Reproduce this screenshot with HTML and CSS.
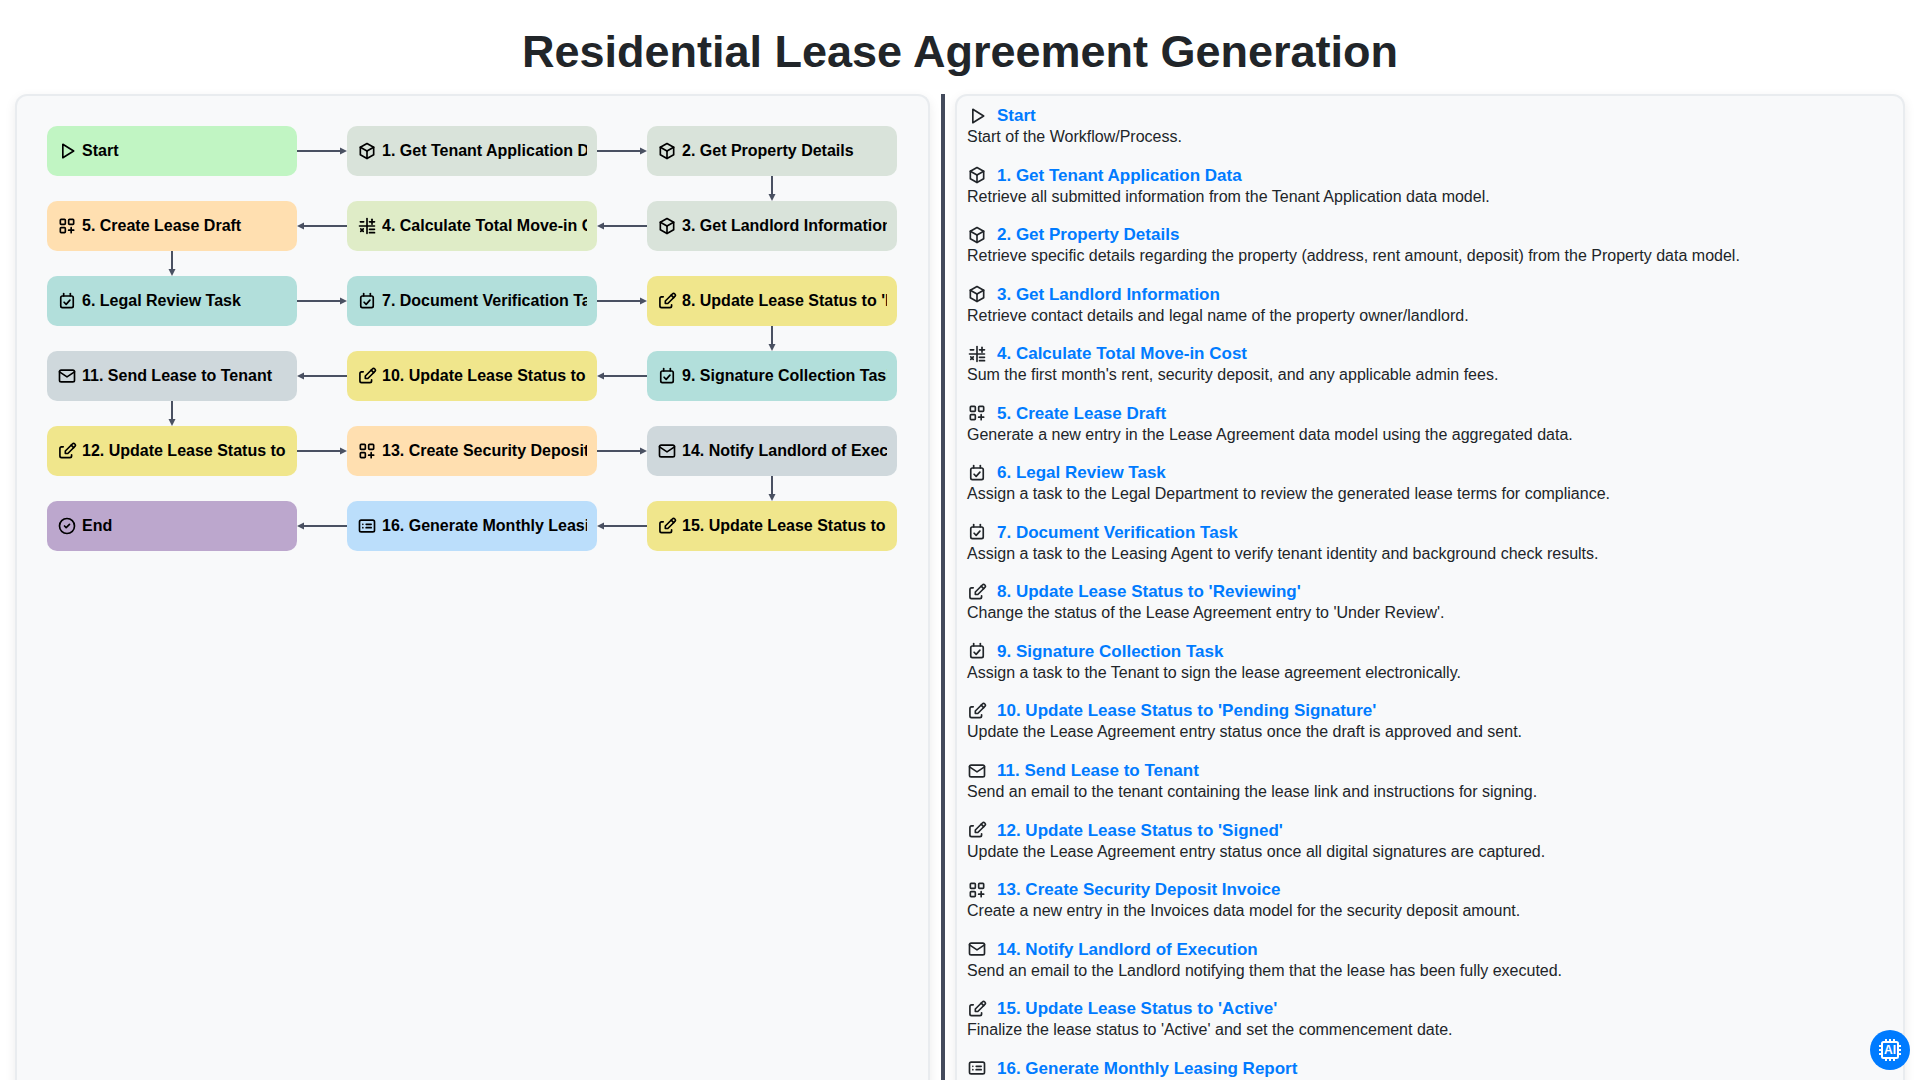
FILE: index.html
```html
<!DOCTYPE html>
<html lang="en">
<head>
<meta charset="utf-8">
<title>Residential Lease Agreement Generation</title>
<link rel="stylesheet" href="styles.css">
</head>
<body>
<svg class="sprite" aria-hidden="true">
  <symbol id="i-play" viewBox="0 0 24 24"><path d="M7 4v16l13-8z"/></symbol>
  <symbol id="i-box" viewBox="0 0 24 24"><path d="M12 3l8 4.5v9L12 21l-8-4.5v-9L12 3"/><path d="M12 12l8-4.5"/><path d="M12 12v9"/><path d="M12 12L4 7.5"/></symbol>
  <symbol id="i-math" viewBox="0 0 24 24"><path d="M3 12h18"/><path d="M12 3v18"/><path d="M4 7h4"/><path d="M15 7h6"/><path d="M18 4v6"/><path d="M4.5 15.5l3 3"/><path d="M7.500 15.500l-3 3"/><path d="M15 16h6"/><path d="M15 20h6"/></symbol>
  <symbol id="i-apps" viewBox="0 0 24 24"><rect x="4" y="4" width="6" height="6" rx="1"/><rect x="14" y="4" width="6" height="6" rx="1"/><rect x="4" y="14" width="6" height="6" rx="1"/><path d="M14 17h6"/><path d="M17 14v6"/></symbol>
  <symbol id="i-task" viewBox="0 0 24 24"><rect x="4.500" y="6" width="15" height="14" rx="2"/><path d="M8 3V6"/><path d="M16 3V6"/><path d="M8.500 13.500l2.500 2.500 4.500-5"/></symbol>
  <symbol id="i-edit" viewBox="0 0 24 24"><path d="M7.500 7H5.500a2 2 0 0 0-2 2v9a2 2 0 0 0 2 2H15.500a2 2 0 0 0 2-2v-1.500"/><path d="M21.385 6.585a2.100 2.100 0 0 0-2.970-2.970L10 12v3h3l8.385-8.415z"/><path d="M17 5l3 3"/></symbol>
  <symbol id="i-mail" viewBox="0 0 24 24"><rect x="3" y="5" width="18" height="14" rx="2"/><path d="M3 7l9 6 9-6"/></symbol>
  <symbol id="i-report" viewBox="0 0 24 24"><rect x="3" y="5" width="18" height="14" rx="2"/><path d="M7 10h.01"/><path d="M7 14h.01"/><path d="M11 10h6"/><path d="M11 14h6"/></symbol>
  <symbol id="i-end" viewBox="0 0 24 24"><circle cx="12" cy="12" r="9"/><path d="M9 12l2 2 4-4"/></symbol>
  <symbol id="i-arrow" viewBox="0 0 50 10"><path class="arrow-line" d="M0 5h44"/><path class="arrow-head" d="M43 1.500L50 5l-7 3.500z"/></symbol>
  <symbol id="i-arrow-down" viewBox="0 0 10 25"><path class="arrow-line" d="M5 0v19"/><path class="arrow-head" d="M1.500 18L5 25l3.500-7z"/></symbol>
</svg>

<h1 class="page-title">Residential Lease Agreement Generation</h1>

<main class="workspace">
  <section class="panel flow-panel">
    <div class="flow-grid">
      <div class="node node-start"><svg class="icon"><use href="#i-play"/></svg><span class="node-label">Start</span></div>
      <svg class="arrow"><use href="#i-arrow"/></svg>
      <div class="node node-data"><svg class="icon"><use href="#i-box"/></svg><span class="node-label">1. Get Tenant Application Data</span></div>
      <svg class="arrow"><use href="#i-arrow"/></svg>
      <div class="node node-data"><svg class="icon"><use href="#i-box"/></svg><span class="node-label">2. Get Property Details</span></div>

      <span class="gap"></span><span class="gap"></span><span class="gap"></span><span class="gap"></span>
      <svg class="arrow-down"><use href="#i-arrow-down"/></svg>

      <div class="node node-create"><svg class="icon"><use href="#i-apps"/></svg><span class="node-label">5. Create Lease Draft</span></div>
      <svg class="arrow arrow-left"><use href="#i-arrow"/></svg>
      <div class="node node-calc"><svg class="icon"><use href="#i-math"/></svg><span class="node-label">4. Calculate Total Move-in Cost</span></div>
      <svg class="arrow arrow-left"><use href="#i-arrow"/></svg>
      <div class="node node-data"><svg class="icon"><use href="#i-box"/></svg><span class="node-label">3. Get Landlord Information</span></div>

      <svg class="arrow-down"><use href="#i-arrow-down"/></svg>
      <span class="gap"></span><span class="gap"></span><span class="gap"></span><span class="gap"></span>

      <div class="node node-task"><svg class="icon"><use href="#i-task"/></svg><span class="node-label">6. Legal Review Task</span></div>
      <svg class="arrow"><use href="#i-arrow"/></svg>
      <div class="node node-task"><svg class="icon"><use href="#i-task"/></svg><span class="node-label">7. Document Verification Task</span></div>
      <svg class="arrow"><use href="#i-arrow"/></svg>
      <div class="node node-update"><svg class="icon"><use href="#i-edit"/></svg><span class="node-label">8. Update Lease Status to 'Reviewing'</span></div>

      <span class="gap"></span><span class="gap"></span><span class="gap"></span><span class="gap"></span>
      <svg class="arrow-down"><use href="#i-arrow-down"/></svg>

      <div class="node node-mail"><svg class="icon"><use href="#i-mail"/></svg><span class="node-label">11. Send Lease to Tenant</span></div>
      <svg class="arrow arrow-left"><use href="#i-arrow"/></svg>
      <div class="node node-update"><svg class="icon"><use href="#i-edit"/></svg><span class="node-label">10. Update Lease Status to 'Pending Signature'</span></div>
      <svg class="arrow arrow-left"><use href="#i-arrow"/></svg>
      <div class="node node-task"><svg class="icon"><use href="#i-task"/></svg><span class="node-label">9. Signature Collection Task</span></div>

      <svg class="arrow-down"><use href="#i-arrow-down"/></svg>
      <span class="gap"></span><span class="gap"></span><span class="gap"></span><span class="gap"></span>

      <div class="node node-update"><svg class="icon"><use href="#i-edit"/></svg><span class="node-label">12. Update Lease Status to 'Signed'</span></div>
      <svg class="arrow"><use href="#i-arrow"/></svg>
      <div class="node node-create"><svg class="icon"><use href="#i-apps"/></svg><span class="node-label">13. Create Security Deposit Invoice</span></div>
      <svg class="arrow"><use href="#i-arrow"/></svg>
      <div class="node node-mail"><svg class="icon"><use href="#i-mail"/></svg><span class="node-label">14. Notify Landlord of Execution</span></div>

      <span class="gap"></span><span class="gap"></span><span class="gap"></span><span class="gap"></span>
      <svg class="arrow-down"><use href="#i-arrow-down"/></svg>

      <div class="node node-end"><svg class="icon"><use href="#i-end"/></svg><span class="node-label">End</span></div>
      <svg class="arrow arrow-left"><use href="#i-arrow"/></svg>
      <div class="node node-report"><svg class="icon"><use href="#i-report"/></svg><span class="node-label">16. Generate Monthly Leasing Report</span></div>
      <svg class="arrow arrow-left"><use href="#i-arrow"/></svg>
      <div class="node node-update"><svg class="icon"><use href="#i-edit"/></svg><span class="node-label">15. Update Lease Status to 'Active'</span></div>
    </div>
  </section>

  <div class="splitter"></div>

  <section class="panel steps-panel">
    <article class="step"><h3 class="step-title"><svg class="icon step-icon"><use href="#i-play"/></svg>Start</h3><p class="step-text">Start of the Workflow/Process.</p></article>
    <article class="step"><h3 class="step-title"><svg class="icon step-icon"><use href="#i-box"/></svg>1. Get Tenant Application Data</h3><p class="step-text">Retrieve all submitted information from the Tenant Application data model.</p></article>
    <article class="step"><h3 class="step-title"><svg class="icon step-icon"><use href="#i-box"/></svg>2. Get Property Details</h3><p class="step-text">Retrieve specific details regarding the property (address, rent amount, deposit) from the Property data model.</p></article>
    <article class="step"><h3 class="step-title"><svg class="icon step-icon"><use href="#i-box"/></svg>3. Get Landlord Information</h3><p class="step-text">Retrieve contact details and legal name of the property owner/landlord.</p></article>
    <article class="step"><h3 class="step-title"><svg class="icon step-icon"><use href="#i-math"/></svg>4. Calculate Total Move-in Cost</h3><p class="step-text">Sum the first month's rent, security deposit, and any applicable admin fees.</p></article>
    <article class="step"><h3 class="step-title"><svg class="icon step-icon"><use href="#i-apps"/></svg>5. Create Lease Draft</h3><p class="step-text">Generate a new entry in the Lease Agreement data model using the aggregated data.</p></article>
    <article class="step"><h3 class="step-title"><svg class="icon step-icon"><use href="#i-task"/></svg>6. Legal Review Task</h3><p class="step-text">Assign a task to the Legal Department to review the generated lease terms for compliance.</p></article>
    <article class="step"><h3 class="step-title"><svg class="icon step-icon"><use href="#i-task"/></svg>7. Document Verification Task</h3><p class="step-text">Assign a task to the Leasing Agent to verify tenant identity and background check results.</p></article>
    <article class="step"><h3 class="step-title"><svg class="icon step-icon"><use href="#i-edit"/></svg>8. Update Lease Status to 'Reviewing'</h3><p class="step-text">Change the status of the Lease Agreement entry to 'Under Review'.</p></article>
    <article class="step"><h3 class="step-title"><svg class="icon step-icon"><use href="#i-task"/></svg>9. Signature Collection Task</h3><p class="step-text">Assign a task to the Tenant to sign the lease agreement electronically.</p></article>
    <article class="step"><h3 class="step-title"><svg class="icon step-icon"><use href="#i-edit"/></svg>10. Update Lease Status to 'Pending Signature'</h3><p class="step-text">Update the Lease Agreement entry status once the draft is approved and sent.</p></article>
    <article class="step"><h3 class="step-title"><svg class="icon step-icon"><use href="#i-mail"/></svg>11. Send Lease to Tenant</h3><p class="step-text">Send an email to the tenant containing the lease link and instructions for signing.</p></article>
    <article class="step"><h3 class="step-title"><svg class="icon step-icon"><use href="#i-edit"/></svg>12. Update Lease Status to 'Signed'</h3><p class="step-text">Update the Lease Agreement entry status once all digital signatures are captured.</p></article>
    <article class="step"><h3 class="step-title"><svg class="icon step-icon"><use href="#i-apps"/></svg>13. Create Security Deposit Invoice</h3><p class="step-text">Create a new entry in the Invoices data model for the security deposit amount.</p></article>
    <article class="step"><h3 class="step-title"><svg class="icon step-icon"><use href="#i-mail"/></svg>14. Notify Landlord of Execution</h3><p class="step-text">Send an email to the Landlord notifying them that the lease has been fully executed.</p></article>
    <article class="step"><h3 class="step-title"><svg class="icon step-icon"><use href="#i-edit"/></svg>15. Update Lease Status to 'Active'</h3><p class="step-text">Finalize the lease status to 'Active' and set the commencement date.</p></article>
    <article class="step"><h3 class="step-title"><svg class="icon step-icon"><use href="#i-report"/></svg>16. Generate Monthly Leasing Report</h3></article>
  </section>
</main>

<button class="ai-fab" aria-label="AI assistant">
  <svg class="ai-chip" viewBox="0 0 24 24"><rect x="4" y="4" width="16" height="16" rx="1.500"/><path d="M8 1v3M12 1v3M16 1v3M8 20v3M12 20v3M16 20v3M1 8h3M1 12h3M1 16h3M20 8h3M20 12h3M20 16h3"/></svg>
  <span class="ai-text">AI</span>
</button>
</body>
</html>
```

FILE: styles.css
```css
* { box-sizing: border-box; }

html, body {
  height: 100%;
  margin: 0;
  overflow: hidden;
}

body {
  display: flex;
  flex-direction: column;
  padding: 0 15px;
  background: #fff;
  color: #212529;
  font-family: "Liberation Sans", Arial, sans-serif;
  font-size: 16px;
}

.sprite { display: none; }

.page-title {
  flex: none;
  height: 94px;
  margin: 0;
  padding-top: 26px;
  font-size: 45px;
  line-height: 52px;
  font-weight: 700;
  text-align: center;
}

.workspace {
  flex: 1;
  display: flex;
  min-height: 0;
}

.panel {
  height: 1200px;
  background: #f8f9fa;
  border: 2px solid #e9ecef;
  border-bottom: 0;
  border-radius: 12px 12px 0 0;
  box-shadow: 0 4px 12px rgba(0, 0, 0, 0.08);
}

.flow-panel {
  flex: none;
  width: 915px;
  padding: 30px;
}

.splitter {
  flex: none;
  width: 4px;
  height: 1200px;
  margin: 0 10px 0 11px;
  background: #444b5c;
}

.steps-panel {
  flex: 1;
  min-width: 0;
  padding: 9px 10px;
}

/* flow diagram */
.flow-grid {
  display: grid;
  grid-template-columns: 250px 50px 250px 50px 250px;
  grid-template-rows: 50px 25px 50px 25px 50px 25px 50px 25px 50px 25px 50px;
}

.node {
  display: flex;
  align-items: center;
  padding: 0 10px;
  border-radius: 10px;
  overflow: hidden;
  color: #000;
  font-weight: 700;
}

.node-label {
  flex: 1;
  min-width: 0;
  overflow: hidden;
  white-space: nowrap;
}

.node-start  { background: #c1f5c3; }
.node-data   { background: #d9e3da; }
.node-calc   { background: #dfecc7; }
.node-create { background: #ffdfb0; }
.node-task   { background: #b2dfdb; }
.node-update { background: #f0e68c; }
.node-mail   { background: #cfd8dc; }
.node-report { background: #bbdefb; }
.node-end    { background: #bca7cd; }

.icon {
  flex: none;
  width: 20px;
  height: 20px;
  margin-right: 5px;
  fill: none;
  stroke: currentColor;
  stroke-width: 2;
  stroke-linecap: round;
  stroke-linejoin: round;
}

.arrow {
  width: 50px;
  height: 10px;
  align-self: center;
  overflow: visible;
}

.arrow-left { transform: scaleX(-1); }

.arrow-down {
  width: 10px;
  height: 25px;
  justify-self: center;
  overflow: visible;
}

.arrow-line {
  fill: none;
  stroke: #4a5162;
  stroke-width: 2;
}

.arrow-head {
  fill: #4a5162;
  stroke: none;
}

/* description list */
.step {
  height: 59.55px;
}

.step-title {
  display: flex;
  align-items: center;
  height: 21px;
  margin: 0;
  color: #007bff;
  font-size: 17px;
  line-height: 21px;
  font-weight: 700;
}

.step-icon {
  margin-right: 10px;
  color: #212529;
}

.step-text {
  margin: 0;
  line-height: 21px;
  color: #212529;
}

/* floating assistant button */
.ai-fab {
  position: fixed;
  right: 10px;
  bottom: 10px;
  display: flex;
  align-items: center;
  justify-content: center;
  width: 40px;
  height: 40px;
  padding: 0;
  border: 0;
  border-radius: 50%;
  background: #007bff;
  color: #fff;
  font-family: inherit;
}

.ai-chip {
  width: 24px;
  height: 24px;
  fill: none;
  stroke: #fff;
  stroke-width: 2;
}

.ai-text {
  position: absolute;
  font-size: 12px;
  font-weight: 700;
  line-height: 1;
}
```
